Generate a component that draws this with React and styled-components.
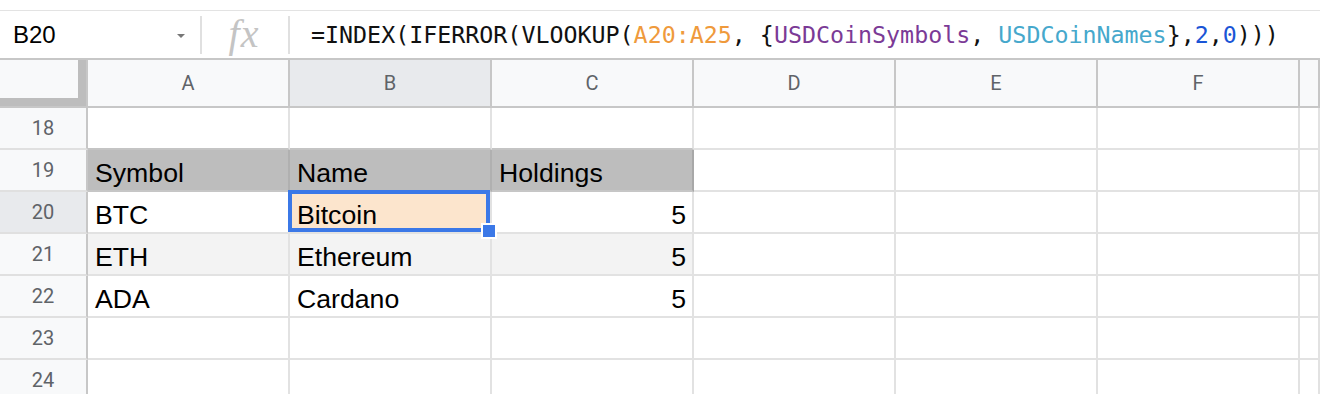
import React from 'react';
import styled, { createGlobalStyle } from 'styled-components';

const GlobalStyle = createGlobalStyle`
  html, body { margin: 0; padding: 0; background: #fff; }
  body { font-family: "Liberation Sans", Arial, sans-serif; }
  * { box-sizing: border-box; }
`;

const Page = styled.div`
  width: 1320px;
  height: 394px;
  overflow: hidden;
  background: #fff;
  padding-top: 10px;
`;

const FormulaBar = styled.div`
  display: flex;
  align-items: center;
  height: 48px;
  border-top: 1px solid #e3e3e3;
`;

const NameBox = styled.div`
  width: 200px;
  height: 100%;
  display: flex;
  align-items: center;
  justify-content: space-between;
  padding: 0 15px 0 13px;
  font-family: "Liberation Sans", Arial, sans-serif;
  font-size: 24px;
  color: #000;
`;

const Caret = styled.span`
  width: 0;
  height: 0;
  border-left: 4px solid transparent;
  border-right: 4px solid transparent;
  border-top: 4px solid #777;
  margin-top: 2px;
`;

const Divider = styled.div`
  width: 2px;
  height: 38px;
  background: #e0e0e0;
  flex: none;
`;

const FxBox = styled.div`
  width: 86px;
  display: flex;
  justify-content: center;
  align-items: center;
  font-family: "Liberation Serif", "Times New Roman", serif;
  font-style: italic;
  font-size: 40px;
  letter-spacing: 1px;
  color: #c4c4c4;
  line-height: 1;
  padding-right: 2px;
  margin-top: -2px;
`;

const FormulaText = styled.div`
  padding-left: 21px;
  font-family: "DejaVu Sans Mono", "Liberation Mono", monospace;
  font-size: 23.3px;
  white-space: pre;
  color: #111;
`;

const Tok = styled.span`
  color: ${(p) => p.$c};
`;

const Sheet = styled.div`
  display: grid;
  grid-template-columns: 88px repeat(6, 202px) 1fr;
  grid-template-rows: 50px;
  grid-auto-rows: 42px;
`;

const Corner = styled.div`
  background: #f8f9fa;
  border-top: 2px solid #c7c7c7;
  border-bottom: 2px solid #c7c7c7;
  border-right: 2px solid #c7c7c7;
`;

const FrozenHandle = styled.div`
  width: 86px;
  height: 46px;
  border-right: 8px solid #bdbdbd;
  border-bottom: 8px solid #bdbdbd;
`;

const ColHead = styled.div`
  background: ${(p) => (p.$active ? '#e8eaed' : '#f8f9fa')};
  border-top: 2px solid #c7c7c7;
  border-bottom: 2px solid #c7c7c7;
  border-right: 2px solid #c7c7c7;
  display: flex;
  align-items: center;
  justify-content: center;
  font-family: Roboto, "Liberation Sans", sans-serif;
  font-size: 20px;
  color: #5f6368;
`;

const RowHead = styled.div`
  background: ${(p) => (p.$active ? '#e8eaed' : '#f8f9fa')};
  border-right: 2px solid #c7c7c7;
  border-bottom: 2px solid #e0e0e0;
  display: flex;
  align-items: center;
  justify-content: center;
  font-family: Roboto, "Liberation Sans", sans-serif;
  font-size: 20px;
  color: #5f6368;
`;

const Cell = styled.div`
  position: relative;
  background: ${(p) => p.$bg || '#fff'};
  border-right: 2px solid ${(p) => p.$line || '#e2e2e2'};
  border-bottom: 2px solid ${(p) => p.$lineB || '#e2e2e2'};
  display: flex;
  align-items: flex-end;
  justify-content: ${(p) => (p.$right ? 'flex-end' : 'flex-start')};
  padding: 0 6px 2px 7px;
  font-family: "Liberation Sans", Arial, sans-serif;
  font-size: 26.67px;
  line-height: 30px;
  color: #000;
  white-space: nowrap;
  z-index: ${(p) => (p.$selected ? 2 : 'auto')};

  &::after {
    content: ${(p) => (p.$selected ? '""' : 'none')};
    position: absolute;
    top: -2px;
    left: -2px;
    right: 0;
    bottom: 0;
    border: 4px solid #3b78e7;
    pointer-events: none;
  }
`;

const FillHandle = styled.span`
  position: absolute;
  right: -7px;
  bottom: -7px;
  width: 16px;
  height: 16px;
  background: #3b78e7;
  border: 2px solid #fff;
  z-index: 3;
`;

const columns = ['A', 'B', 'C', 'D', 'E', 'F', ''];

const rows = [
  { n: 18, values: [] },
  { n: 19, values: ['Symbol', 'Name', 'Holdings'], kind: 'header' },
  { n: 20, values: ['BTC', 'Bitcoin', '5'], active: true },
  { n: 21, values: ['ETH', 'Ethereum', '5'], kind: 'band' },
  { n: 22, values: ['ADA', 'Cardano', '5'] },
  { n: 23, values: [] },
  { n: 24, values: [] },
];

function cellProps(row, ci) {
  const p = {};
  if (ci < 3) {
    if (row.kind === 'header') {
      p.$bg = '#bdbdbd';
      p.$line = '#b0b0b0';
      p.$lineB = '#c6c6c6';
    }
    if (row.kind === 'band') p.$bg = '#f3f3f3';
    if (row.n === 18) p.$lineB = '#c4c4c4';
    if (row.kind === 'header' && ci === 2) p.$line = '#a8a8a8';
  }
  if (ci === 2 && row.kind !== 'header') p.$right = true;
  if (row.active && ci === 1) {
    p.$bg = '#fce5cd';
    p.$selected = true;
  }
  return p;
}

export default function App() {
  return (
    <Page>
      <GlobalStyle />
      <FormulaBar>
        <NameBox>
          B20
          <Caret />
        </NameBox>
        <Divider />
        <FxBox>fx</FxBox>
        <Divider />
        <FormulaText>
          =INDEX(IFERROR(VLOOKUP(<Tok $c="#ef9a3c">A20:A25</Tok>, {'{'}
          <Tok $c="#7b3a96">USDCoinSymbols</Tok>, <Tok $c="#46a8cc">USDCoinNames</Tok>
          {'}'},<Tok $c="#1a55d6">2</Tok>,<Tok $c="#1a55d6">0</Tok>)))
        </FormulaText>
      </FormulaBar>
      <Sheet>
        <Corner>
          <FrozenHandle />
        </Corner>
        {columns.map((c, i) => (
          <ColHead key={'h' + i} $active={c === 'B'}>
            {c}
          </ColHead>
        ))}
        {rows.map((row) => (
          <React.Fragment key={row.n}>
            <RowHead $active={row.active}>{row.n}</RowHead>
            {columns.map((c, ci) => {
              const p = cellProps(row, ci);
              return (
                <Cell key={ci} {...p}>
                  {row.values[ci] || ''}
                  {p.$selected && <FillHandle />}
                </Cell>
              );
            })}
          </React.Fragment>
        ))}
      </Sheet>
    </Page>
  );
}
